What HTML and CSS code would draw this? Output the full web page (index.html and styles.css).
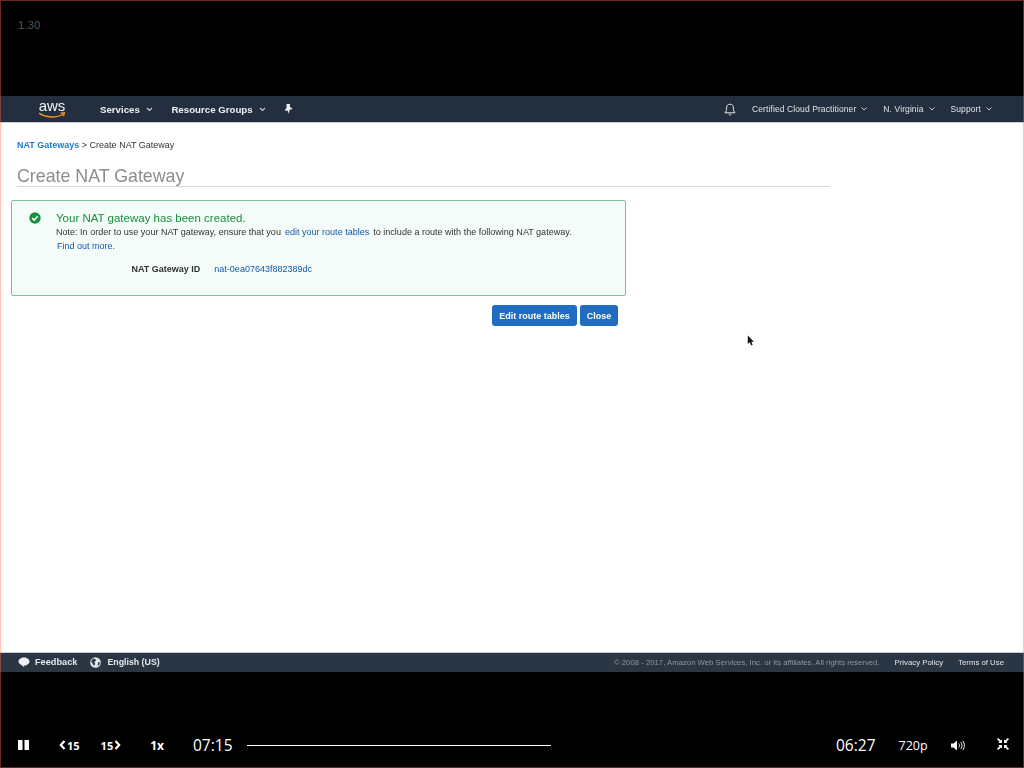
FILE: index.html
```html
<!DOCTYPE html>
<html lang="en">
<head>
<meta charset="utf-8">
<title>Create NAT Gateway</title>
<link rel="stylesheet" href="styles.css">
</head>
<body>
<div class="frame">
  <div class="top-band"><span class="rate">1.30</span></div>
  <div class="screen">
    <header class="nav">
      <div class="logo">
        <span class="logo-text">aws</span>
        <svg class="logo-smile" width="28" height="7" viewBox="0 0 28 7"><path d="M1 1.2C8 6 19 6.2 25.5 2" fill="none" stroke="#f29a1f" stroke-width="1.4"/><path d="M22.6 1.2l3.8-.4-.9 3.6" fill="none" stroke="#f29a1f" stroke-width="1.2"/></svg>
      </div>
      <span class="nav-item nav-services">Services<svg class="chev" width="7" height="5" viewBox="0 0 7 5"><path d="M1 1l2.5 2.5L6 1" fill="none" stroke="currentColor" stroke-width="1.2"/></svg></span>
      <span class="nav-item nav-groups">Resource Groups<svg class="chev" width="7" height="5" viewBox="0 0 7 5"><path d="M1 1l2.5 2.5L6 1" fill="none" stroke="currentColor" stroke-width="1.2"/></svg></span>
      <svg class="pin" width="9" height="10" viewBox="0 0 9 10"><path d="M2.500 0h3.600l-.3 2.600L8.600 5 5.600 5.800 5 9.800 3.400 6.400.6 6.800 2.600 3.600z" fill="#eef0f2"/></svg>
      <svg class="bell" width="12" height="13" viewBox="0 0 12 13"><path d="M6 1.2c-2.3 0-3.4 1.700-3.400 3.800 0 2.400-.6 3.600-1.600 4.800h10C10 8.600 9.400 7.400 9.400 5c0-2.100-1.100-3.800-3.400-3.800zM4.700 11.200c.5.900 2.100.900 2.600 0" fill="none" stroke="#e6e9ec" stroke-width="1"/></svg>
      <span class="nav-small nav-account">Certified Cloud Practitioner<svg class="chev-s" width="6" height="4" viewBox="0 0 6 4"><path d="M.5.5L3 3 5.500.5" fill="none" stroke="currentColor"/></svg></span>
      <span class="nav-small nav-region">N. Virginia<svg class="chev-s" width="6" height="4" viewBox="0 0 6 4"><path d="M.5.5L3 3 5.500.5" fill="none" stroke="currentColor"/></svg></span>
      <span class="nav-small nav-support">Support<svg class="chev-s" width="6" height="4" viewBox="0 0 6 4"><path d="M.5.5L3 3 5.500.5" fill="none" stroke="currentColor"/></svg></span>
    </header>

    <main class="content">
      <div class="crumbs"><a class="crumb-link">NAT Gateways</a> &gt; Create NAT Gateway</div>
      <h1 class="title">Create NAT Gateway</h1>
      <section class="alert">
        <svg class="ok-icon" width="12" height="12" viewBox="0 0 12 12"><circle cx="6" cy="6" r="5.700" fill="#1d8f3c"/><path d="M3.200 6.100l2 2 3.600-3.800" fill="none" stroke="#fff" stroke-width="1.500"/></svg>
        <div class="alert-body">
          <div class="alert-title">Your NAT gateway has been created.</div>
          <div class="alert-note">Note: In order to use your NAT gateway, ensure that you <a class="link link-gap">edit your route tables</a> to include a route with the following NAT gateway.</div>
          <div class="alert-more"><a class="link">Find out more.</a></div>
          <div class="alert-id"><span class="id-label">NAT Gateway ID</span><a class="link id-value">nat-0ea07643f882389dc</a></div>
        </div>
      </section>
      <div class="actions">
        <button class="btn btn-edit">Edit route tables</button>
        <button class="btn btn-close">Close</button>
      </div>
      <svg class="cursor" width="8" height="12" viewBox="0 0 8 12"><path d="M.8.500v8.600l2-1.800 1.400 3.200 1.500-.7-1.400-3h2.600z" fill="#111"/></svg>
    </main>

    <footer class="foot">
      <svg class="foot-chat" width="12" height="11" viewBox="0 0 12 11"><path d="M6 .5c3 0 5.500 1.700 5.500 4S9 8.500 6.500 8.500c-.3 0-.6 0-.9-.1L6.500 10.500 3.400 8C1.800 7.300.5 6 .5 4.500.5 2.200 3 .5 6 .5z" fill="#eef0f2"/></svg>
      <span class="foot-strong foot-feedback">Feedback</span>
      <svg class="foot-globe" width="11" height="11" viewBox="0 0 11 11"><circle cx="5.500" cy="5.500" r="5.300" fill="#e6e9ec"/><path d="M3 1.600l2.400.4.600 1.600-1.600 1.400.8 1.800-1.200 2.200L2.400 6.200 1 4.500zM8.200 5l1.800.5-1 2.800-1.500.8z" fill="#2d3a48"/></svg>
      <span class="foot-strong foot-lang">English (US)</span>
      <span class="foot-copy">© 2008 - 2017, Amazon Web Services, Inc. or its affiliates. All rights reserved.</span>
      <span class="foot-link foot-privacy">Privacy Policy</span>
      <span class="foot-link foot-terms">Terms of Use</span>
    </footer>
  </div>

  <div class="player">
    <svg class="ctl-pause" width="11" height="10" viewBox="0 0 11 10"><path d="M0 0h4.500v10H0zM6.500 0H11v10H6.500z" fill="#fff"/></svg>
    <span class="skip skip-back"><svg width="7" height="10" viewBox="0 0 7 10"><path d="M5.500 1L1.800 5l3.700 4" fill="none" stroke="#fff" stroke-width="2.200"/></svg>15</span>
    <span class="skip skip-forward">15<svg width="7" height="10" viewBox="0 0 7 10"><path d="M1.500 1l3.700 4-3.700 4" fill="none" stroke="#fff" stroke-width="2.200"/></svg></span>
    <span class="speed">1x</span>
    <span class="time time-now">07:15</span>
    <div class="track"></div>
    <span class="time time-left">06:27</span>
    <span class="quality">720p</span>
    <svg class="ctl-volume" width="14" height="11" viewBox="0 0 14 11"><path d="M0 3.500h2.500L6 .5v10L2.500 7.500H0z" fill="#fff"/><path d="M7.800 3.500c.9 1.200.9 2.800 0 4M9.800 2c1.600 2 1.600 5 0 7M11.800.8c2.100 2.800 2.100 6.600 0 9.400" fill="none" stroke="#fff" stroke-width="1"/></svg>
    <svg class="ctl-shrink" width="12" height="12" viewBox="0 0 12 12"><path d="M0 1.200L1.200 0l2.600 2.600L5 1.400V5H1.400l1.200-1.200zM12 1.200L10.800 0 8.200 2.600 7 1.400V5h3.600L9.400 3.800zM0 10.800L1.200 12l2.600-2.600L5 10.600V7H1.400l1.200 1.200zM12 10.800L10.800 12l-2.600-2.600L7 10.600V7h3.600L9.400 8.200z" fill="#fff"/></svg>
  </div>
  <div class="edge"></div>
</div>
</body>
</html>
```
FILE: styles.css
```css
* { box-sizing: border-box; }
html, body { margin: 0; padding: 0; background: #000; }
body { font-family: "Liberation Sans", Arial, sans-serif; }
svg { display: block; flex: none; }
a { text-decoration: none; }

.frame { position: relative; width: 1024px; height: 768px; display: flex; flex-direction: column; overflow: hidden; background: #000; }
.edge { position: absolute; inset: 0; border: 1px solid rgba(255, 105, 65, .4); pointer-events: none; }

.top-band { height: 96px; padding: 19px 0 0 18px; }
.rate { font-size: 11.500px; line-height: 13px; color: #555; display: block; }

.screen { height: 576px; display: flex; flex-direction: column; background: #fff; filter: blur(.35px); }

.nav { height: 27px; display: flex; align-items: center; background: #232f3e; border-bottom: 1px solid #c9ced3; color: #eef0f2; padding-left: 38px; }
.logo { width: 28px; height: 22px; display: flex; flex-direction: column; align-items: center; }
.logo-text { font-size: 15px; line-height: 15px; height: 14px; color: #f2f3f4; letter-spacing: -.1px; }
.logo-smile { margin-top: 0; }
.nav-item { display: flex; align-items: center; font-size: 9.700px; font-weight: 700; }
.nav-services { margin-left: 34px; }
.nav-groups { margin-left: 18px; }
.chev { margin-left: 6.500px; color: #c5cad0; }
.pin { margin-left: 18px; }
.bell { margin-left: auto; margin-right: 16px; }
.nav-small { display: flex; align-items: center; font-size: 8.500px; color: #dfe3e6; letter-spacing: .1px; }
.chev-s { margin-left: 5px; color: #c5cad0; }
.nav-region { margin-left: 16px; }
.nav-support { margin-left: 16px; margin-right: 32px; }

.content { position: relative; flex: 1; padding: 16px 0 0 11px; color: #333; }
.crumbs { margin-left: 6px; font-size: 9px; line-height: 12px; color: #333; }
.crumb-link { color: #1f78d1; font-weight: 700; }
.title { width: 813px; height: 22px; margin: 14px 0 13px 6px; border-bottom: 1px solid #d5d8da; font-size: 17.800px; line-height: 22px; font-weight: 400; color: #8d8d8d; }
.alert { width: 615px; height: 96px; display: flex; background: #f3fcf8; border: 1px solid #7fbf94; border-radius: 2px; padding: 11px 0 0 17px; }
.alert-body { margin-left: 15px; }
.alert-title { font-size: 11.500px; line-height: 13px; color: #1a8f3e; margin-bottom: 1px; }
.alert-note { font-size: 9.040px; line-height: 13px; color: #333; white-space: nowrap; }
.link { color: #1357ad; }
.link-gap { margin: 0 1.500px; }
.alert-more { font-size: 9px; line-height: 13px; margin: 1px 0 0 1px; }
.alert-id { display: flex; margin: 10px 0 0 75.500px; font-size: 9px; line-height: 13px; }
.id-label { font-weight: 700; color: #333; }
.id-value { margin-left: 14px; }

.actions { width: 607px; display: flex; justify-content: flex-end; gap: 3px; margin-top: 9px; }
.btn { height: 21px; padding: 0; border: 0; border-radius: 3px; background: #1f6cc0; color: #fff; font: 700 9px "Liberation Sans", Arial, sans-serif; }
.btn-edit { width: 85px; }
.btn-close { width: 38px; }
.cursor { position: absolute; left: 747px; top: 212px; }

.foot { height: 20px; display: flex; align-items: center; background: #2a3644; border-top: 1px solid #c9ced3; padding: 0 0 1px 18px; }
.foot-chat { margin-right: 5px; }
.foot-strong { font-weight: 700; color: #e4e7ea; }
.foot-feedback { font-size: 9.200px; margin-right: 13px; }
.foot-lang { font-size: 8.800px; }
.foot-globe { margin-right: 6px; }
.foot-copy { margin-left: auto; color: #8d96a0; font-size: 7.750px; }
.foot-link { color: #e4e7ea; font-size: 7.800px; }
.foot-privacy { margin-left: 15px; }
.foot-terms { margin-left: 15px; margin-right: 20px; }

.player { flex: 1; display: flex; align-items: center; padding: 50px 0 0 18px; color: #fff; font-family: "Open Sans", sans-serif; }
.ctl-pause { margin-top: -1px; }
.skip { display: flex; align-items: center; font-size: 11px; font-weight: 700; gap: 1px; }
.skip-back { margin-left: 30px; }
.skip-forward { margin-left: 21px; }
.speed { margin-left: 29px; font-size: 12px; font-weight: 700; }
.time { font-size: 15.500px; line-height: 20px; }
.time-now { margin-left: 29px; width: 40px; }
.track { width: 304px; height: 1px; margin-left: 14px; background: #fff; }
.time-left { margin-left: 285px; }
.quality { margin-left: 23px; font-size: 12.500px; }
.ctl-volume { margin-left: 23px; }
.ctl-shrink { margin-top: -2px; margin-left: 32px; }
```
